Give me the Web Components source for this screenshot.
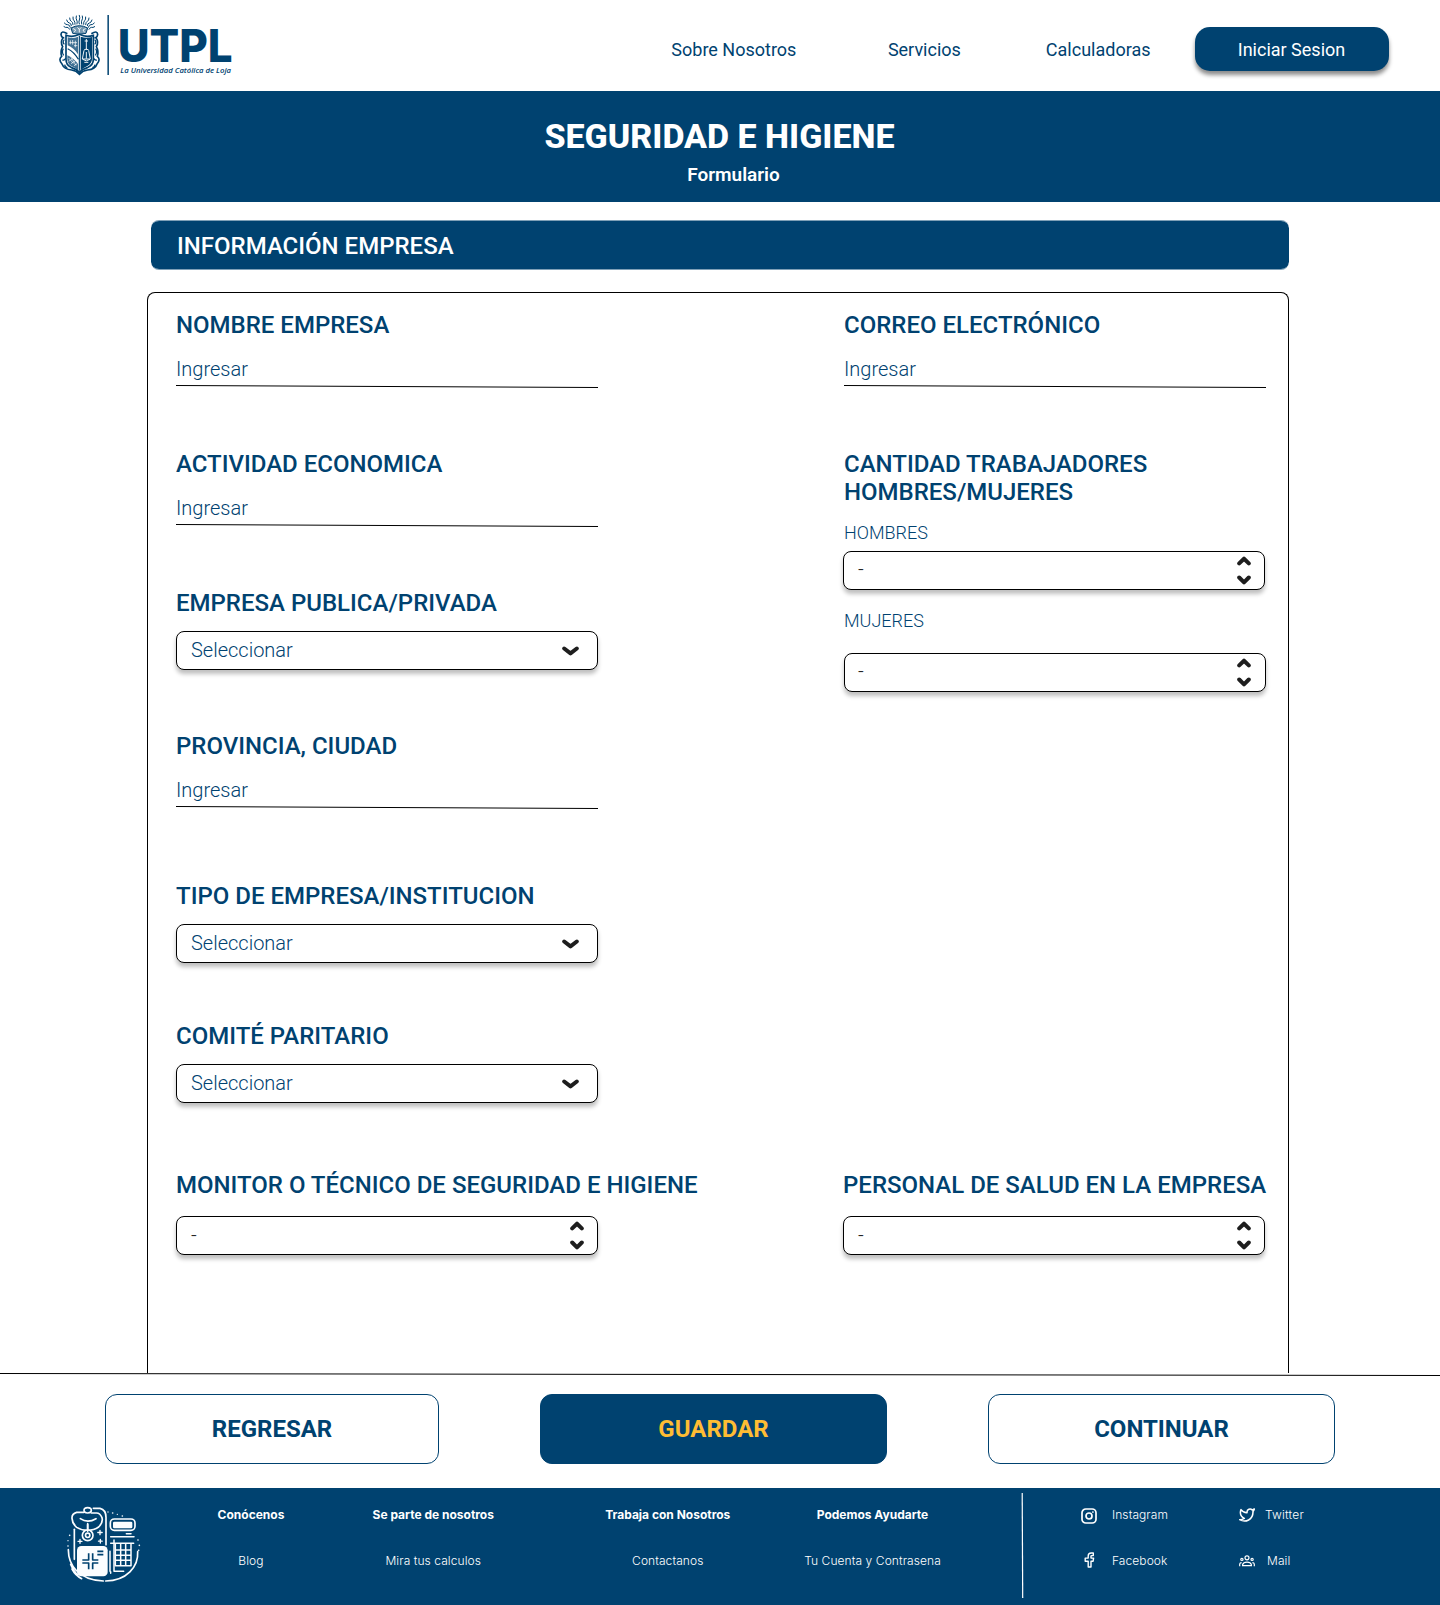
<!DOCTYPE html>
<html lang="es">
<head>
<meta charset="utf-8">
<title>UTPL - Seguridad e Higiene</title>
<style>
  :root { --navy: #004270; --gold: #ffbd33; --ink: #1e1e1e; }
  body { margin: 0; background: #fff; color: var(--navy); font-family: Roboto, "Liberation Sans", sans-serif; }
</style>
</head>
<body>
<utpl-page></utpl-page>

<script>
const define = (name, html, setup) => customElements.define(name, class extends HTMLElement {
  constructor() {
    super();
    this.attachShadow({ mode: 'open' }).innerHTML = html;
  }
  connectedCallback() { if (setup) setup(this, this.shadowRoot); }
});

/* ---------- Brand marks ---------- */
define('utpl-logo', `
<style>:host{display:block;width:220px;height:91px} svg{display:block}</style>
<svg width="220" height="91" viewBox="0 0 660 273" fill="none" stroke="#004270">
  <g stroke-width="3" stroke-linecap="round">
    <path d="M118 46q3 8 0 14t0 12M109 48q-2 8 1 12t1 12M127 48q2 8-1 12t-1 12M99 51q-1 8 3 11t3 11M137 51q1 8-3 11t-3 11M89 54q0 8 5 10t5 10M147 54q0 8-5 10t-5 10M80 60q2 8 8 9t6 8M156 60q-2 8-8 9t-6 8M73 69q5 6 10 5t8 8M163 69q-5 6-10 5t-8 8M72 80q6 4 9 2t8 6M164 80q-6 4-9 2t-8 6"/>
  </g>
  <path d="M98 100L93 84Q118 70 143 84L138 100Q118 106 98 100Z" fill="#004270" fill-opacity=".55" stroke-width="3"/>
  <path d="M100 86l7 4l-4 6M113 83l5 5l5-5M118 88v8M136 86l-7 4l4 6" stroke="#fff" stroke-width="2.600" stroke-linecap="round"/>
  <path d="M82 101Q64 90 63 103Q65 115 73 113M154 101Q172 90 173 103Q171 115 163 113M69 113Q60 127 68 140Q60 154 65 169Q54 178 66 192Q72 208 95 210Q109 212 118 223Q128 212 143 210Q166 208 171 192Q183 178 172 169Q177 154 169 140Q177 127 168 113" stroke-width="5"/>
  <path d="M73 119q-7 7 0 14M164 119q7 7 0 14M70 146q-6 10 1 20M167 146q6 10-1 20M67 180q7 2 10-5M171 180q-7 2-10-5M82 203q-7-1-8-9M157 203q7-1 8-9" stroke-width="3.600"/>
  <path d="M78 106Q99 113 118 103Q138 113 160 106V178Q160 195 144 202Q127 207 118 217Q109 207 93 202Q78 195 78 178Z" fill="#fff" stroke-width="5"/>
  <path d="M122 110Q140 116 156 111V178Q155 191 142 198Q130 203 122 211Z" fill="#004270" stroke="none"/>
  <path d="M82 166Q97 172 114 191V211Q106 203 95 199Q82 192 82 178Z" fill="#004270" fill-opacity=".75" stroke="none"/>
  <path d="M83 112Q100 117 114 110V163Q101 143 83 136Z" fill="#004270" fill-opacity=".75" stroke="none"/>
  <path d="M118 107V212M83 146Q103 156 115 178" stroke-width="3.500"/>
  <g stroke="#fff" stroke-width="2.800">
    <path d="M139 117V150M134 123h10M132 150q7-6 14 0M132 151l-5 26h24l-5-26M139 156v20M128 178q11 9 22 0M133 187h12"/>
    <path d="M91 121v12M98 120v14M106 122v20M88 128h23M102 137h10" stroke-width="2.200"/>
    <path d="M86 174l14 16M93 172l15 24M86 184l12-8M93 191l14-9M102 197l10-6" stroke-width="2.200"/>
  </g>
  <path d="M204.500 45V225" stroke-width="4.500"/>
  <g fill="#004270" stroke="none">
    <text x="233" y="187" font-family="Inter,sans-serif" font-size="137" font-weight="800" textLength="345" lengthAdjust="spacingAndGlyphs">UTPL</text>
    <text x="241" y="218" font-family="'Open Sans',sans-serif" font-size="23" font-style="italic" font-weight="600" textLength="332" lengthAdjust="spacingAndGlyphs">La Universidad Católica de Loja</text>
  </g>
</svg>`);

define('health-emblem', `
<style>:host{display:block;width:110px;height:110px} svg{display:block}</style>
<svg width="110" height="110" viewBox="0 0 330 330" fill="none" stroke="#fbfdff" stroke-width="5" stroke-linecap="round" stroke-linejoin="round">
  <ellipse cx="113" cy="61" rx="11" ry="8"/>
  <path d="M102 67H80Q65 71 66 85Q67 101 80 112Q94 121 112 121Q132 121 146 111Q160 97 156 83Q150 69 140 69H124"/>
  <path d="M130 55H150Q168 59 168 82V164"/>
  <path d="M91 86Q113 101 138 86M113 101V125"/>
  <circle cx="113" cy="136" r="16" fill="#004270"/><circle cx="113" cy="136" r="6.500"/><path d="M113 104V124"/>
  <path d="M150 121v13M143.500 127.500h13M151 148v11M145.500 153.500h11M90 148v12M84 154h12" stroke-width="4"/>
  <path d="M73 118V208"/>
  <rect x="181" y="87" width="74" height="34" rx="12"/>
  <rect x="189" y="95" width="58" height="20" rx="4" fill="#fbfdff" stroke="none"/>
  <path d="M229 131h14M182 140h70M182 160h69M192 150V244H221M180 184v60M182 245v5" stroke-width="4.500"/>
  <path d="M196 162V227H243V162M212 162V227M227 162V227M196 180H243M196 196H243M196 211H243" stroke-width="4.500"/>
  <rect x="81" y="168" width="92" height="91" rx="13" fill="#fbfdff" stroke="none"/>
  <path d="M116 190V210H97M128 190V210H145M97 219H116V238M145 219H128V238M142 184h18M142 194h18" stroke="#004270" stroke-width="5" stroke-linecap="butt"/>
  <path d="M55 179C55 223 84 270 160 273M167 273C230 272 266 230 263 185M62 223Q72 246 84 255M66 237Q76 256 95 266"/>
  <g fill="#fbfdff" stroke="none"><circle cx="174" cy="66" r="2"/><circle cx="188" cy="69" r="2.500"/><circle cx="202" cy="73" r="2"/><circle cx="217" cy="78" r="2.500"/><circle cx="59" cy="136" r="2.500"/><circle cx="54" cy="152" r="2"/><circle cx="54" cy="168" r="2.500"/><circle cx="264" cy="150" r="2.500"/><circle cx="268" cy="166" r="2.500"/><circle cx="266" cy="181" r="2.500"/></g>
</svg>`);

/* ---------- Header ---------- */
define('nav-link', `
<style>:host{display:block;font-size:18px;line-height:21px;white-space:nowrap}</style><slot></slot>`);

define('login-button', `
<style>:host{display:flex;align-items:center;justify-content:center;width:194px;height:44px;border-radius:15px;background:var(--navy);color:#fff;font-size:18px;line-height:21px;box-shadow:0 4px 4px rgba(0,0,0,.45);box-sizing:border-box;padding:1px 1px 0 0}</style><slot></slot>`);

define('site-header', `
<style>
:host{display:flex;height:91px;background:#fff;padding:0 51px 0 40px;box-sizing:border-box}
nav{flex:1;display:flex;justify-content:flex-end;align-items:center;height:99px}
.a{margin-right:91.500px}.b{margin-right:85px}.c{margin-right:44.500px}
login-button{margin-top:-1px}
</style>
<utpl-logo></utpl-logo>
<nav><nav-link class="a">Sobre Nosotros</nav-link><nav-link class="b">Servicios</nav-link><nav-link class="c">Calculadoras</nav-link><login-button>Iniciar Sesion</login-button></nav>`);

define('page-banner', `
<style>
:host{display:flex;flex-direction:column;align-items:center;height:111px;background:var(--navy);color:#fff;box-sizing:border-box;padding-top:24px}
h1{margin:0 1px 0 0;font-size:34px;line-height:42px;font-weight:800}
p{margin:7px 0 0 27px;font-size:19px;line-height:22px;font-weight:600}
</style>
<h1><slot></slot></h1><p><slot name="subtitle"></slot></p>`);

/* ---------- Form ---------- */
define('section-title', `
<style>
:host{display:block;box-sizing:border-box;width:1138px;height:50px;margin:18px 0 0 151px;padding:11px 26px 0;border:solid rgba(0,66,112,.5);border-width:1px 0;border-radius:8px;background:var(--navy) padding-box;color:#fff;font-size:24px;line-height:28px;font-weight:500}
</style><slot></slot>`);

define('field-label', `
<style>:host{display:block;font-size:24px;line-height:28px;font-weight:500;white-space:nowrap}</style><slot></slot>`);

define('text-field', `
<style>
:host{display:block;width:422px}
.v{margin-top:18px;font-size:20px;line-height:24px;font-weight:300}
svg{display:block;margin-top:4px}
</style>
<field-label><slot></slot></field-label>
<div class="v">Ingresar</div>
<svg width="422" height="3"><path d="M0 .5L422 2.500" stroke="#000"/></svg>`);

const boxStyle = `box-sizing:border-box;width:422px;height:39px;border:1px solid #000;border-radius:8px;background:#fff;box-shadow:0 4px 4px rgba(0,0,0,.25);display:flex;justify-content:space-between;`;

define('select-field', `
<style>
:host{display:block;width:422px}
.box{${boxStyle}margin-top:14px;padding:7px 18px 0 14px;font-size:20px;line-height:23px;font-weight:300}
svg{margin-top:7px}
</style>
<field-label><slot></slot></field-label>
<div class="box"><span>Seleccionar</span><svg width="17" height="10" fill="none" stroke="#1e1e1e" stroke-width="4" stroke-linecap="round" stroke-linejoin="round"><path d="M2.200 2.500L8.500 7.400L14.800 2.500"/></svg></div>`);

define('number-stepper', `
<style>
:host{display:block}
.box{${boxStyle}padding:var(--dash-top,6px) 13px 0 var(--dash-left,14px);font-size:20px;line-height:23px;font-weight:300;color:var(--ink)}
svg{margin-top:calc(4px - var(--dash-top,6px));margin-right:var(--arrow-shift,0)}
</style>
<div class="box"><span>-</span><svg width="14" height="30" fill="none" stroke="#1e1e1e" stroke-width="4" stroke-linecap="round" stroke-linejoin="round"><path d="M2.200 7.400L7 2.700L11.800 7.400M2.200 21.500L7 26.300L11.800 21.500"/></svg></div>`);

define('number-field', `
<style>:host{display:block;width:422px;--dash-top:7px} number-stepper{margin-top:17px}</style>
<field-label><slot></slot></field-label><number-stepper></number-stepper>`);

define('worker-count', `
<style>
:host{display:block;width:422px}
p{margin:16px 0 0;font-size:18px;line-height:21px;font-weight:300}
p+number-stepper{margin:8px 0 0 -1px}
p.second{margin-top:20px}
p.second+number-stepper{margin:22px 0 0;--dash-left:13px;--arrow-shift:1px}
</style>
<field-label>CANTIDAD TRABAJADORES<br>HOMBRES/MUJERES</field-label>
<p>HOMBRES</p><number-stepper></number-stepper>
<p class="second">MUJERES</p><number-stepper></number-stepper>`);

define('company-form', `
<style>
:host{display:grid;box-sizing:border-box;width:1142px;height:1081px;margin:22px 0 0 147px;padding:18px 0 0 28px;border:1px solid #000;border-bottom:0;border-radius:8px 8px 0 0;grid-template-columns:422px 422px;column-gap:246px;grid-template-rows:139px 139px 143px 150px 140px 149px 1fr}
.l{grid-column:1}
.r{grid-column:2}
worker-count{grid-row:2 / 7}
.staff,.monitor{grid-row:7}
.staff{margin-left:-1px}
</style>
<text-field class="l" style="grid-row:1">NOMBRE EMPRESA</text-field>
<text-field class="r" style="grid-row:1">CORREO ELECTRÓNICO</text-field>
<text-field class="l" style="grid-row:2">ACTIVIDAD ECONOMICA</text-field>
<worker-count class="r"></worker-count>
<select-field class="l" style="grid-row:3">EMPRESA PUBLICA/PRIVADA</select-field>
<text-field class="l" style="grid-row:4">PROVINCIA, CIUDAD</text-field>
<select-field class="l" style="grid-row:5">TIPO DE EMPRESA/INSTITUCION</select-field>
<select-field class="l" style="grid-row:6">COMITÉ PARITARIO</select-field>
<number-field class="l monitor">MONITOR O TÉCNICO DE SEGURIDAD E HIGIENE</number-field>
<number-field class="r staff">PERSONAL DE SALUD EN LA EMPRESA</number-field>`);

/* ---------- Actions ---------- */
define('action-button', `
<style>
:host{display:flex;align-items:center;justify-content:center;box-sizing:border-box;height:70px;width:347px;border:1px solid var(--navy);border-radius:12px;color:var(--navy);font-size:24px;line-height:28px;font-weight:700}
:host([primary]){background:var(--navy);color:var(--gold)}
</style><slot></slot>`);

define('action-bar', `
<style>
:host{display:block;height:115px;background:#fff}
svg{display:block}
div{display:flex;justify-content:space-between;padding:18px 105px 0}
.back{width:334px}
</style>
<svg width="1440" height="3"><path d="M0 .5L1440 2.500" stroke="#000"/></svg>
<div><action-button class="back">REGRESAR</action-button><action-button primary>GUARDAR</action-button><action-button>CONTINUAR</action-button></div>`);

/* ---------- Footer ---------- */
define('footer-column', `
<style>
:host{display:flex;flex-direction:column;align-items:center;gap:31px;white-space:nowrap;font-size:12px;line-height:15px;font-weight:300}
b{font-weight:700}
span{letter-spacing:.08px}
</style><b><slot></slot></b><span><slot name="link"></slot></span>`);

const icons = {
  instagram: ['0 0 16 16', '<rect x="1" y="1" width="14" height="14" rx="3.800"/><circle cx="8" cy="8" r="3"/><circle cx="11.900" cy="4.100" r=".5" stroke-width="1"/>', 1.7],
  facebook: ['0 0 16 16', '<path d="M12.300 1H10.200C8.300 1 7.200 2.200 7.200 4V6.100H4.200V9.200H7.200V15H10V9.200H12.100L12.600 6.100H10V4.300Q10 3.600 10.700 3.600H12.300Z" stroke-linejoin="round"/>', 1.4],
  twitter: ['0 0 24 24', '<path d="M23 3a10.900 10.900 0 0 1-3.140 1.530A4.480 4.480 0 0 0 12 7.530v1A10.660 10.660 0 0 1 3 4s-4 9 5 13a11.640 11.640 0 0 1-7 2c9 5 20 0 20-11.500 0-.28-.03-.56-.08-.83A7.720 7.720 0 0 0 23 3z" stroke-linejoin="round"/>', 2.3],
  mail: ['0 0 16 16', '<circle cx="8" cy="4.800" r="2"/><circle cx="2.900" cy="6.400" r="1.100"/><circle cx="13.100" cy="6.400" r="1.100"/><path d="M3.600 12.700V11.700Q4.300 9.200 8 9.200Q11.700 9.200 12.400 11.700V12.700ZM.7 13.200V11Q.9 9.700 2.600 9.700M15.300 13.200V11Q15.100 9.700 13.400 9.700"/>', 1.2]
};
define('social-link', `
<style>
:host{display:flex;align-items:flex-start;height:16px;font-size:12px;line-height:15px;font-weight:300;letter-spacing:var(--track,.08px);white-space:nowrap}
svg{flex:none;margin:var(--drop,0) var(--gap,15px) 0 0}
.i{display:contents}
</style><span class="i"></span><slot></slot>`,
(el, root) => {
  const [box, paths, w] = icons[el.getAttribute('icon')];
  root.querySelector('.i').innerHTML = `<svg width="16" height="16" viewBox="${box}" fill="none" stroke="#fff" stroke-width="${w}">${paths}</svg>`;
});

define('site-footer', `
<style>
:host{display:flex;height:117px;background:var(--navy);color:#fff;font-family:Inter,sans-serif}
health-emblem{margin:2px 0 0 50px}
footer-column{margin-top:19px;flex:none}
.c1{width:182px}.c2{width:182.500px}.c3{width:286.500px}.c4{width:123px}
.rule{margin:5px 0 0 87px;flex:none}
.social{display:grid;grid-template-columns:158px auto;grid-template-rows:16px 16px;row-gap:30px;margin:19px 0 0 57px;align-content:start}
</style>
<health-emblem></health-emblem>
<footer-column class="c1">Conócenos<span slot="link">Blog</span></footer-column>
<footer-column class="c2">Se parte de nosotros<span slot="link">Mira tus calculos</span></footer-column>
<footer-column class="c3">Trabaja con Nosotros<span slot="link">Contactanos</span></footer-column>
<footer-column class="c4">Podemos Ayudarte<span slot="link">Tu Cuenta y Contrasena</span></footer-column>
<svg class="rule" width="3" height="105"><path d="M1.200 0L1.700 105" stroke="#fff" stroke-width="1.200"/></svg>
<div class="social">
<social-link icon="instagram" style="--drop:1px">Instagram</social-link><social-link icon="twitter" style="--gap:10px;--track:.2px">Twitter</social-link>
<social-link icon="facebook" style="--drop:-1px">Facebook</social-link><social-link icon="mail" style="--gap:12px">Mail</social-link>
</div>`);

define('utpl-page', `
<style>:host{display:block;width:1440px;height:1605px;overflow:hidden}</style>
<site-header></site-header>
<page-banner>SEGURIDAD E HIGIENE<span slot="subtitle">Formulario</span></page-banner>
<section-title>INFORMACIÓN EMPRESA</section-title>
<company-form></company-form>
<action-bar></action-bar>
<site-footer></site-footer>`);
</script>
</body>
</html>
